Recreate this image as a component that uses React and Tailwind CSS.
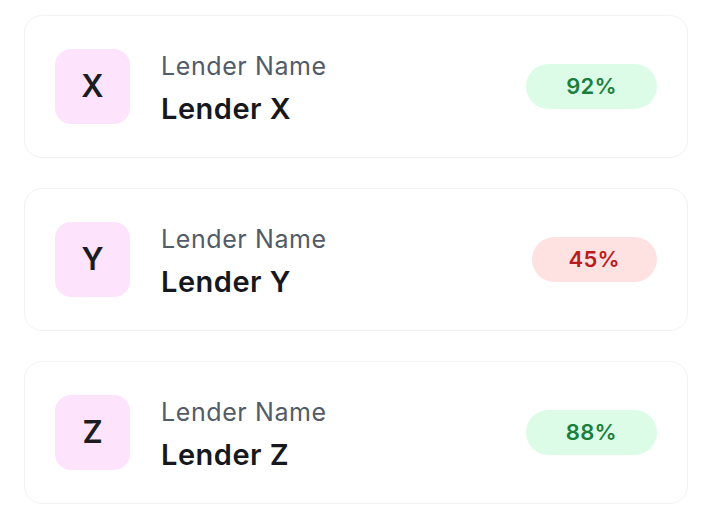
import React from 'react';

const lenders = [
  { letter: 'X', name: 'Lender X', score: 92 },
  { letter: 'Y', name: 'Lender Y', score: 45 },
  { letter: 'Z', name: 'Lender Z', score: 88 },
];

const LenderCard = ({ lender }) => {
  const good = lender.score >= 50;
  return (
    <div className="flex items-center justify-between h-[143px] pl-[30px] pr-[30px] bg-white border border-[#f1f2f4] rounded-[18px]">
      <div className="flex items-center gap-[31px]">
        <div className="w-[75px] h-[75px] rounded-[16px] bg-[#fee3fd] flex items-center justify-center text-[31px] font-semibold text-[#1a1c22]">
          {lender.letter}
        </div>
        <div className="flex flex-col mt-[4px]">
          <span className="text-[25px] leading-[30px] tracking-[0.6px] text-[#525b68]">Lender Name</span>
          <span className="text-[29px] leading-[36px] mt-[10px] tracking-[0.5px] font-semibold text-[#16181d]">{lender.name}</span>
        </div>
      </div>
      <span
        className={
          good
            ? 'h-[45px] px-[40px] rounded-full bg-[#dcfce7] text-[#1b7f3e] flex items-center text-[22px] tracking-[0.3px] font-semibold'
            : 'h-[45px] px-[37px] rounded-full bg-[#fee2e2] text-[#b91c1c] flex items-center text-[22px] tracking-[0.3px] font-semibold'
        }
      >
        {lender.score}%
      </span>
    </div>
  );
};

export default function App() {
  return (
    <div className="min-h-[532px] bg-white pt-[15px] pl-[24px] font-['Inter',sans-serif]">
      <div className="w-[664px] flex flex-col gap-[30px]">
        {lenders.map((l) => (
          <LenderCard key={l.letter} lender={l} />
        ))}
      </div>
    </div>
  );
}
